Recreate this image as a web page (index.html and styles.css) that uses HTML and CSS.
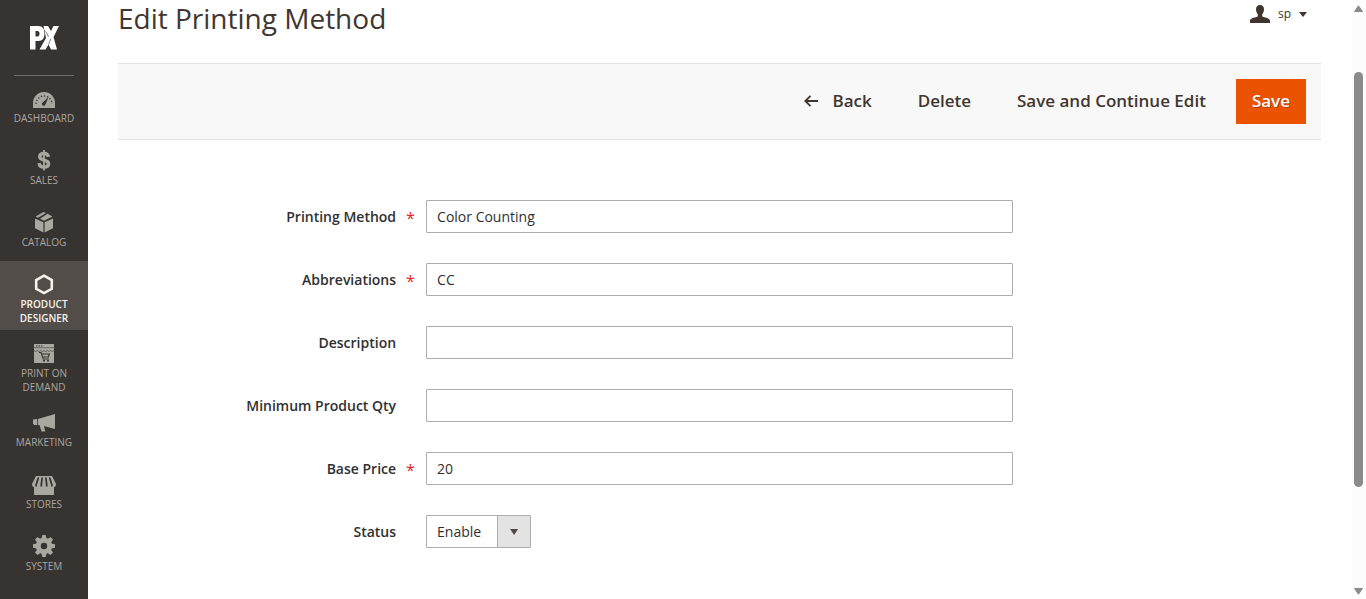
FILE: index.html
```html
<!DOCTYPE html>
<html lang="en">
<head>
<meta charset="utf-8">
<title>Edit Printing Method</title>
<meta name="viewport" content="width=device-width, initial-scale=1">
<link rel="stylesheet" href="styles.css">
</head>
<body>
<div class="page">
  <aside class="sidebar">
    <a class="logo" href="#" aria-label="Home">
      <svg width="30" height="26" viewBox="0 0 30 26">
        <path fill="#fff" fill-rule="evenodd" d="M1 1h8.500q6 0 6 7.500t-6 7.500H6.500v8.500H1zM6.500 6v5.500h1.700q2.300 0 2.300-2.800T8.200 6z"/>
        <path fill="#fff" d="M14.500 1h4.500l3 5 2.500-5H30l-5.500 11L28 24.500h-6l-2.500-5-3 5h-6L17 13z"/>
        <path fill="none" stroke="#373330" stroke-width=".6" d="M15 5.500q3.500 2 4.500 6.500M19.500 19.500l2.500-6"/>
      </svg>
    </a>
    <nav class="menu">
      <a class="item" href="#">
        <svg class="icon" viewBox="0 0 22 22"><path fill="currentColor" d="M0 21v-5a11 11 0 0 1 22 0v5z"/><path stroke="#373330" stroke-width="1.300" stroke-dasharray="1.300 1.800" fill="none" d="M3 17a8 8 0 0 1 16 0"/><path fill="#373330" d="M15.500 10l-3 7.500a1.800 1.800 0 1 1-2.700-2z"/></svg>
        <span>Dashboard</span>
      </a>
      <a class="item" href="#">
        <svg class="icon" viewBox="0 0 22 22"><path fill="none" stroke="currentColor" stroke-width="3.400" d="M15.500 7.800C15 5.300 13.500 4.500 11 4.500c-2.800 0-4.300 1.200-4.300 3.100 0 4.700 8.900 2.500 8.900 7.200 0 2.200-1.800 3.300-4.600 3.300-3 0-4.600-1.300-4.900-4"/><path stroke="currentColor" stroke-width="1.800" d="M11 1v20.500"/></svg>
        <span>Sales</span>
      </a>
      <a class="item" href="#">
        <svg class="icon" viewBox="0 0 22 22"><path fill="currentColor" d="M2 7.500l8.400 3.700v10.300L2 17.300zM20 7.500l-8.400 3.700v10.300l8.400-4.200zM10.500 1l2.500 1-8 4.700L2.600 5.600zM14.500 2.700l5 2.700-8.500 4.400-4-2z"/></svg>
        <span>Catalog</span>
      </a>
      <a class="item active" href="#" aria-current="page">
        <svg class="icon" viewBox="0 0 22 22"><path fill="none" stroke="currentColor" stroke-width="2.600" d="M11 2.700l7.800 4.300v8.800L11 20.100l-7.800-4.300V7z"/></svg>
        <span>Product Designer</span>
      </a>
      <a class="item" href="#">
        <svg class="icon" viewBox="0 0 22 22"><path fill="currentColor" d="M1 2h20v19H1z"/><path fill="none" stroke="#373330" d="M3 4h1.500m1 0H7m1 0h1.500"/><path fill="none" stroke="#373330" stroke-width=".5" d="M1 5.700h20"/><path fill="none" stroke="#373330" stroke-width=".6" d="M1 8.500q1.600 2 3.200 0q1.700 2 3.400 0q1.700 2 3.400 0q1.700 2 3.400 0q1.700 2 3.400 0q1.600 2 3.200 0"/><path fill="none" stroke="#373330" stroke-width="1.200" d="M6 10.500h2l2.300 6.500H16M8.800 12h7.500l-1 3H9.800"/><circle cx="11" cy="18.700" r="1" fill="#373330"/><circle cx="15" cy="18.700" r="1" fill="#373330"/></svg>
        <span>Print on Demand</span>
      </a>
      <a class="item" href="#">
        <svg class="icon" viewBox="0 0 22 22"><path fill="currentColor" d="M0 8.500h1L4 8v6H1v-.700H0zM4.800 8L22 3v15l-11-3 1.200 5.500H8.500L6.500 14H4.800z"/></svg>
        <span>Marketing</span>
      </a>
      <a class="item" href="#">
        <svg class="icon wide" viewBox="0 0 24 22"><path fill="currentColor" d="M4 3h16l4 8q0 3-2 3v8H2v-8q-2 0-2-3z"/><path fill="none" stroke="#373330" stroke-width="1.700" d="M6.500 4.500L4.200 11.500v2M10.200 4.500l-.900 7v2M13.800 4.500l.900 7v2M17.500 4.500l2.300 7v2"/></svg>
        <span>Stores</span>
      </a>
      <a class="item" href="#">
        <svg class="icon" viewBox="0 0 22 22"><circle cx="11" cy="11" r="5.700" fill="none" stroke="currentColor" stroke-width="5"/><g fill="currentColor"><path id="tooth" d="M8.500 4l.800-4h3.400l.800 4z"/><use href="#tooth" transform="rotate(45 11 11)"/><use href="#tooth" transform="rotate(90 11 11)"/><use href="#tooth" transform="rotate(135 11 11)"/><use href="#tooth" transform="rotate(180 11 11)"/><use href="#tooth" transform="rotate(225 11 11)"/><use href="#tooth" transform="rotate(270 11 11)"/><use href="#tooth" transform="rotate(315 11 11)"/></g></svg>
        <span>System</span>
      </a>
    </nav>
  </aside>

  <main class="content">
    <header class="header">
      <h1 class="title">Edit Printing Method</h1>
      <button class="user" type="button">
        <svg width="20" height="18" viewBox="0 0 20 18"><path fill="currentColor" d="M10 0c2.700 0 4 1.700 4 4.300 0 2-.700 3.700-1.800 4.900v2.100c1 1.300 7.800 1.400 7.800 4.400V18H0v-2.300c0-3 6.800-3.100 7.800-4.400V9.200C6.700 8 6 6.300 6 4.300 6 1.700 7.300 0 10 0z"/></svg>
        <span>sp</span>
        <svg width="8" height="5" viewBox="0 0 8 5"><path fill="currentColor" d="M0 0h8L4 5z"/></svg>
      </button>
    </header>

    <div class="toolbar">
      <button class="action" type="button">
        <svg width="14" height="12" viewBox="0 0 14 12"><path fill="none" stroke="currentColor" stroke-width="1.800" d="M14 6H1.500M6.500 .800L1.300 6l5.200 5.200"/></svg>
        Back
      </button>
      <button class="action" type="button">Delete</button>
      <button class="action" type="button">Save and Continue Edit</button>
      <button class="action primary" type="submit" form="method-form">Save</button>
    </div>

    <form class="form" id="method-form">
      <div class="field">
        <label class="label required" for="method">Printing Method</label>
        <input class="input" id="method" type="text" value="Color Counting" required>
      </div>
      <div class="field">
        <label class="label required" for="abbr">Abbreviations</label>
        <input class="input" id="abbr" type="text" value="CC" required>
      </div>
      <div class="field">
        <label class="label" for="description">Description</label>
        <input class="input" id="description" type="text">
      </div>
      <div class="field">
        <label class="label" for="qty">Minimum Product Qty</label>
        <input class="input" id="qty" type="text">
      </div>
      <div class="field">
        <label class="label required" for="price">Base Price</label>
        <input class="input" id="price" type="text" value="20" required>
      </div>
      <div class="field">
        <label class="label" for="status">Status</label>
        <div class="select-wrap">
          <select class="input select" id="status"><option>Enable</option><option>Disable</option></select>
        </div>
      </div>
    </form>
  </main>

  <div class="scrollbar" aria-hidden="true">
    <svg width="9" height="7" viewBox="0 0 9 7"><path fill="#8b8b8b" stroke="#8b8b8b" stroke-linejoin="round" d="M.500 6.500h8L4.500 .800z"/></svg>
    <div class="track"><div class="thumb"></div></div>
    <svg width="9" height="7" viewBox="0 0 9 7"><path fill="#8b8b8b" stroke="#8b8b8b" stroke-linejoin="round" d="M.500 .500h8l-4 5.700z"/></svg>
  </div>
</div>
</body>
</html>
```

FILE: styles.css
```css
* {
  box-sizing: border-box;
}

body {
  margin: 0;
  background: #fff;
  color: #41362f;
  font: 14px/20px "Open Sans", "Noto Sans", sans-serif;
}

button,
input,
select {
  font: inherit;
  color: inherit;
}

.page {
  display: flex;
  min-height: 100vh;
}

/* Sidebar */
.sidebar {
  flex: 0 0 88px;
  background: #373330;
}

.logo {
  display: flex;
  align-items: center;
  justify-content: center;
  height: 75px;
}

.menu {
  background: linear-gradient(#736963, #736963) center top / 60px 1px no-repeat;
}

.item {
  display: flex;
  flex-direction: column;
  align-items: center;
  gap: 2px;
  min-height: 62px;
  padding: 12px 10px 5px;
  color: #aaa6a0;
  font-size: 10px;
  line-height: 14px;
  text-align: center;
  text-decoration: none;
  text-transform: uppercase;
}

.item.active {
  background: #524d49;
  color: #f7f3eb;
  font-weight: 600;
}

.icon {
  width: 22px;
  height: 22px;
}

.icon.wide {
  width: 24px;
}

/* Content */
.content {
  flex: 1;
  min-width: 0;
  padding: 0 30px;
}

.header {
  display: flex;
  justify-content: space-between;
  align-items: flex-start;
  padding-bottom: 27px;
}

.title {
  margin: 0;
  font-size: 28px;
  font-weight: 400;
  line-height: 36px;
}

.user {
  display: flex;
  align-items: center;
  gap: 8px;
  padding: 4px 14px 0 0;
  border: 0;
  background: none;
  font-size: 12px;
}

.toolbar {
  display: flex;
  justify-content: flex-end;
  align-items: center;
  padding: 15px;
  border: solid #e3e3e3;
  border-width: 1px 0;
  background: #f8f8f8;
}

.action {
  display: flex;
  align-items: center;
  gap: 14px;
  height: 45px;
  margin-right: 14px;
  padding: 0 16px 2px;
  border: 0;
  background: none;
  font-size: 17px;
  font-weight: 600;
}

.action.primary {
  margin-right: 0;
  background: #eb5202;
  color: #fff;
  text-shadow: 1px 1px 0 rgba(0, 0, 0, .25);
}

/* Form */
.form {
  display: grid;
  gap: 30px;
  padding: 60px 0 50px;
}

.field {
  display: grid;
  grid-template-columns: 21fr 40fr 21fr;
  align-items: center;
}

.label {
  padding-right: 30px;
  color: #303030;
  font-weight: 600;
  text-align: right;
}

.label.required {
  padding-right: 12px;
}

.label.required::after {
  content: "*";
  display: inline-block;
  width: 8px;
  margin-left: 10px;
  color: #e22626;
  font-size: 16px;
  font-weight: 400;
  line-height: 16px;
  vertical-align: -2px;
}

.input {
  width: 100%;
  height: 33px;
  padding: 0 10px;
  border: 1px solid #adadad;
  border-radius: 1px;
  background: #fff;
  color: #303030;
}

.select-wrap {
  position: relative;
  justify-self: start;
}

.select {
  width: 105px;
  appearance: none;
  background: linear-gradient(to left, #e3e3e3 32px, #adadad 32px 33px, #fff 33px);
}

.select-wrap::after {
  content: "";
  position: absolute;
  top: 14px;
  right: 13px;
  width: 8px;
  height: 6px;
  background: #514943;
  clip-path: polygon(0 0, 100% 0, 50% 100%);
  pointer-events: none;
}

/* Scrollbar */
.scrollbar {
  display: flex;
  flex: 0 0 15px;
  flex-direction: column;
  align-items: center;
  padding: 5px 0 4px;
  background: #fcfcfc;
}

.track {
  display: flex;
  flex: 1;
  flex-direction: column;
}

.track::before {
  content: "";
  flex: 60;
}

.track::after {
  content: "";
  flex: 101;
}

.thumb {
  flex: 415;
  width: 9px;
  border-radius: 5px;
  background: #8b8b8b;
}
```
